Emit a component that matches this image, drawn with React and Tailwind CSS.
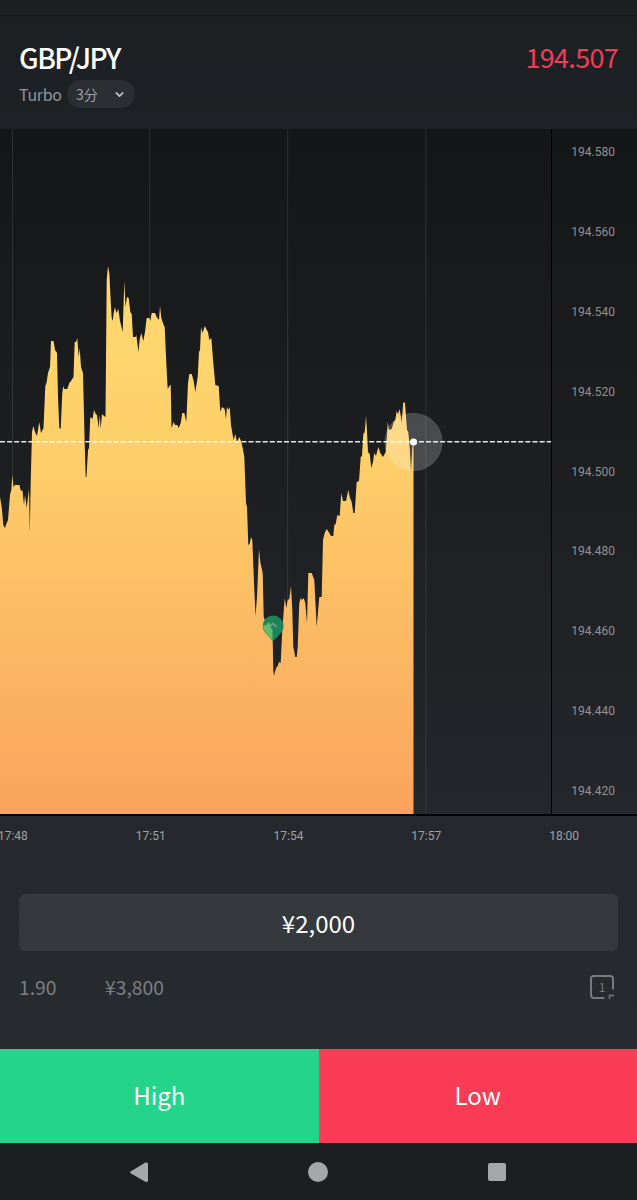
import React from "react";
import { ChevronDown } from "lucide-react";

const prices = [
  "194.580",
  "194.560",
  "194.540",
  "194.520",
  "194.500",
  "194.480",
  "194.460",
  "194.440",
  "194.420",
];

const times = ["17:48", "17:51", "17:54", "17:57", "18:00"];

const gridLines = [12.5, 149.7, 287.7, 425.8];

// x,y pairs of the price line, y starts at the top of the header
const line = `0,497 1.7,507 3.3,525 5,528 6.7,523 8,520 10,495 11.3,490 12.3,475 13.5,487 15,485 19.5,485
20.5,490 22.5,491 24,505 25,495 26.7,508 29,489 29.8,533 30.7,483 32,432 33.3,426 35,432 37,436
39.3,422 41,433 43.5,428 45.3,386 46.5,383 48,373 50,367 51,341 53.5,341 55,350 57,353 58,397
59.3,428 60.7,429 62.3,393 63.3,386 64.3,389 67.3,389 69.3,383 71,381 73.5,377 74.7,342 76,342
77.3,338 78.7,357 79.7,348 81,367 83,373 84.5,437 85.7,477 86.5,477 88,450 89,448 90.3,417
92.5,419 94,410 95.7,414 97,415 98.7,428 99.7,415 100.7,429 102,414 104,416 105.5,417 106.7,280
108,266 109.3,273 110.5,297 111.7,318 112.7,321 113.7,313 115,307 116.3,313 118.3,309 120,321
122.7,332 124.3,281 125.5,307 127,297 128.7,298 130.3,312 131.7,314 133,337 135.5,337 136.3,335
138.5,352 139.7,339 141.3,333 143.3,341 145,332 146.7,318 149.3,318 150.3,321 151.7,313 155,313
156.7,317 159,320 160,306 161.3,318 163.7,325 164.7,327 166.3,363 167.7,389 170,385 170.7,385
171.5,428 173.7,422 175,425 177.3,425 178.7,428 180.7,423 182.3,413 184.3,413 186.3,422 188,383
189.3,374 191.7,374 193.7,381 195.3,392 197.7,377 199,352 200,350 201,327 202.3,333 205,326
206.7,330 208,332 209.3,340 211.3,338 213.3,363 215.3,385 218.7,386 220.3,412 222,407 224.7,409
226,419 227,407 228.5,410 229.7,407 231,425 232.7,435 233.7,440 235.3,434 237,442 239.3,437
241,441 242.7,448 244.3,457 246,503 247,507 248.3,545 249.7,544 251,537 252.3,540 254,583
255.5,616 257,597 259,549 260.3,562 262.7,573 263.7,617 266.7,625 269,622 271,628 272.7,640
273.3,670 274,676 276,668 277.7,666 279,662 280.7,663 282.3,630 284.7,598 286.3,608 287.7,600
289.3,599 291,586 292.3,610 293.3,647 295.3,657 296.7,657 297.7,647 299.3,603 300.7,598 302,600
303.7,598 305.3,603 307,623 308.3,573 311.7,573 314.3,580 316.7,627 319.3,597 321.7,597 323,540
324.7,533 326.7,529 329.3,533 331,536 333.3,536 334.3,525 335.7,524 337.3,515 339.7,516
341.3,493 343,501 346,501 348.3,490 350,498 351.7,502 353.3,513 354.7,513 356.7,482 359,481
360.7,457 362,456 363.3,434 364.7,432 366,416 367,432 368,452 369.7,454 371.3,468 373,462
374.3,453 376,456 378.3,447 380.3,453 383,457 385.7,452 387,435 387.7,422 389,430 391.7,429
393.7,422 395.3,420 396.7,411 398,414 399.7,409 401.7,423 403.3,402 405,403 407,430 408.3,432
409.7,448 411,472 412.3,448 413.5,442`;

const Header = () => (
  <header className="h-[113px] shrink-0 px-[19px] pt-[21px]">
    <div className="flex items-center justify-between h-10">
      <h1 className="text-[28px] font-medium text-white tracking-[-1.5px]">
        GBP/JPY
      </h1>
      <span className="text-[27px] tracking-[-0.7px] text-[#f43b57]">
        194.507
      </span>
    </div>
    <div className="flex items-center gap-[5px] mt-[3px]">
      <span className="w-[43px] text-[16px] tracking-[-0.3px] text-[#92959a]">
        Turbo
      </span>
      <button className="flex items-center justify-between w-[68px] h-[28px] rounded-full bg-[#2b2e33] pl-[9px] pr-[9px] text-[14px] text-[#a0a2a5]">
        3分
        <ChevronDown size={13} strokeWidth={3} className="text-[#c3c5c7]" />
      </button>
    </div>
  </header>
);

const Chart = () => (
  <div className="flex h-[685px] shrink-0 bg-linear-to-b from-[#151617] to-[#24272b]">
    <svg width="551" height="685" viewBox="0 129 551 685" className="shrink-0">
      <defs>
        <linearGradient id="area" x1="0" y1="266" x2="0" y2="814" gradientUnits="userSpaceOnUse">
          <stop offset="0" stopColor="#ffd970" />
          <stop offset="0.32" stopColor="#fed06a" />
          <stop offset="1" stopColor="#faa45d" />
        </linearGradient>
      </defs>
      {gridLines.map((x) => (
        <path key={x} d={`M${x} 128V814`} stroke="#fff" strokeOpacity="0.1" />
      ))}
      <polygon points={`0,814 ${line} 413.5,814`} fill="url(#area)" />

      {/* current price */}
      <path d="M0 441.700H551" stroke="#fff" strokeWidth="1.5" strokeOpacity="0.9" strokeDasharray="5 2.1" />
      <circle cx="413.5" cy="442" r="29" fill="#fff" fillOpacity="0.2" />
      <circle cx="413.5" cy="442" r="28.5" fill="none" stroke="#fff" strokeOpacity="0.06" />
      <circle cx="413.5" cy="442" r="3.6" fill="#fff" />

      {/* entry marker */}
      <path
        d="M273 641.500L265.500 633a10.400 10.400 0 1 1 15.400 0z"
        fill="#1c8558"
      />
      <path d="M263.300 625 266.700 625 268 622 269 624 270 622 271 628 272.500 630V640.500L265.800 633Q263.300 630 263.300 625z" fill="#62bd6a" />
      <path d="M269.500 627l3.500-3.500 3.500 3.500" fill="none" stroke="#7fa38f" strokeWidth="1.300" />
    </svg>
    <div className="flex flex-col flex-1 justify-between items-end border-l border-black pt-[15px] pb-[14px] pr-[22px] font-['Roboto',sans-serif] text-[12px] leading-[17px] text-[#929395]">
      {prices.map((p) => (
        <span key={p}>{p}</span>
      ))}
    </div>
  </div>
);

const NavBar = () => (
  <nav className="flex h-[57px] shrink-0 items-center justify-between bg-[#1c1f21] border-t border-[#141719] pl-[129px] pr-[131.500px] text-[#a5a7a9]">
    <svg width="20" height="20" viewBox="0 0 20 20" fill="currentColor">
      <path d="M2 9.200 16.400.6Q19 0 19 2V18.600Q19 20.500 16.400 19.800L2 11.400Q.4 10.300 2 9.200Z" />
    </svg>
    <span className="size-5 rounded-full bg-current" />
    <span className="size-[18px] rounded-[2px] bg-current" />
  </nav>
);

export default function App() {
  return (
    <div className="flex flex-col w-[637px] h-[1200px] overflow-hidden bg-linear-to-b from-[#1c2023] to-[#292c31] font-['Noto_Sans_CJK_JP',sans-serif]">
      <div className="h-4 shrink-0 border-b border-[#15181a]" />
      <Header />
      <Chart />

      <div className="border-t-2 border-black h-[80px] shrink-0 pt-[12px]">
        <div className="flex -ml-[56px] w-[693px] font-['Roboto',sans-serif] text-[12px] leading-[17px] text-[#a0a2a4]">
          {times.map((t) => (
            <span key={t} className="w-[137.800px] shrink-0 text-center">
              {t}
            </span>
          ))}
        </div>
      </div>

      <div className="flex-1 px-[19px]">
        <div className="flex h-[57px] items-center justify-center rounded-[6px] bg-[#35383d] text-[24px] text-white">
          ¥2,000
        </div>
        <div className="flex h-[30px] items-center mt-[21px] text-[19.300px] text-[#7c7f83]">
          <span className="w-[86px]">1.90</span>
          <span>¥3,800</span>
          <span className="relative ml-auto mr-[4px] flex size-6 items-center justify-center">
            <svg width="24" height="24" viewBox="0 0 24 24" fill="none" stroke="#777a7e" className="absolute inset-0">
              <path d="M14.500 23H4Q1 23 1 20V4Q1 1 4 1H20Q23 1 23 4V14.500" strokeWidth="2" />
              <path d="M19.500 24V20.500H24" strokeWidth="1.500" />
            </svg>
            <span className="text-[12px] leading-none text-[#777a7e]">1</span>
          </span>
        </div>
      </div>

      <div className="grid grid-cols-2 h-[94px] shrink-0 text-[24px] text-white">
        <button className="bg-[#25d48b] pb-[3px]">High</button>
        <button className="bg-[#f93b55] pb-[3px]">Low</button>
      </div>
      <NavBar />
    </div>
  );
}
